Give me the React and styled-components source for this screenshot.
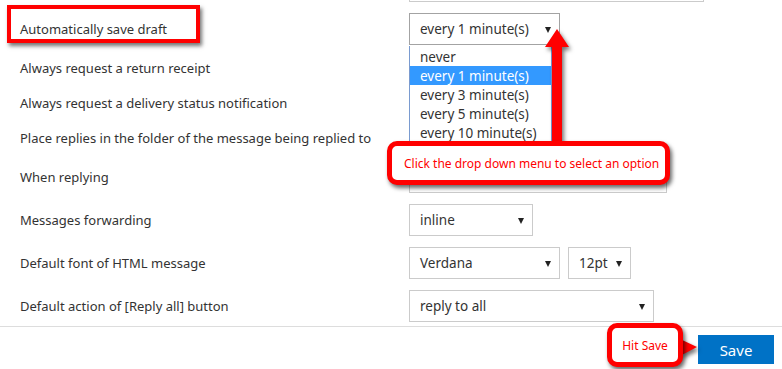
import React from "react";
import styled, { createGlobalStyle } from "styled-components";

const GlobalStyle = createGlobalStyle`
  html, body {
    margin: 0;
    padding: 0;
    background: #fff;
    overflow: hidden;
  }
  body {
    font-family: "Noto Sans", "Open Sans", sans-serif;
    color: #333;
  }
`;

const Page = styled.div`
  position: relative;
  width: 782px;
  height: 369px;
  overflow: hidden;
`;

const Form = styled.div`
  display: grid;
  grid-template-columns: 389px 1fr;
  row-gap: 11px;
  padding-left: 20px;
  padding-bottom: 4px;
  border-bottom: 1px solid #ddd;
`;

const Clip = styled.div`
  grid-column: 2;
  height: 2px;
  overflow: hidden;
  display: flex;
  align-items: flex-end;
`;

const Label = styled.div`
  font-size: 13px;
  height: ${(p) => (p.tall ? 32 : 24)}px;
  display: flex;
  align-items: center;
  grid-column: 1;
  white-space: nowrap;
`;

const Controls = styled.div`
  grid-column: 2;
  display: flex;
  gap: 8px;
  align-items: center;
`;

const Select = styled.div`
  position: relative;
  box-sizing: border-box;
  width: ${(p) => p.w}px;
  height: 32px;
  flex-shrink: 0;
  border: 1px solid ${(p) => (p.focused ? "#a3a3a3" : "#cbcbcb")};
  font-size: 13.5px;
  padding-left: 10px;
  display: flex;
  align-items: center;
  color: #333;
  &::after {
    content: "";
    position: absolute;
    right: 8px;
    top: 13px;
    border-left: 3.5px solid transparent;
    border-right: 3.5px solid transparent;
    border-top: 6px solid #222;
  }
`;

const Dropdown = styled.ul`
  position: absolute;
  left: 409px;
  top: 46px;
  width: 143px;
  height: 100px;
  margin: 0;
  padding: 1px 0 0;
  list-style: none;
  background: #fff;
  box-sizing: border-box;
  border: 1px solid #7a9bd0;
  border-top: none;
`;

const Option = styled.li`
  height: 19px;
  line-height: 20px;
  padding-left: 10px;
  font-size: 13.5px;
  background: ${(p) => (p.active ? "#3399ff" : "transparent")};
  color: ${(p) => (p.active ? "#fff" : "#333")};
`;

const Footer = styled.div`
  display: flex;
  justify-content: flex-end;
  padding: 8px 8px 0 0;
`;

const SaveButton = styled.button`
  width: 76px;
  height: 29px;
  border: none;
  background: #0072c6;
  color: #fff;
  font-family: "Noto Sans", sans-serif;
  font-size: 15px;
  padding: 0;
`;

const Highlight = styled.div`
  position: absolute;
  left: 7px;
  top: 5px;
  width: 193px;
  height: 38px;
  box-sizing: border-box;
  border: 4px solid #f00;
  box-shadow: 2px 3px 4px rgba(0, 0, 0, 0.55);
  pointer-events: none;
`;

const Callout = styled.div`
  position: absolute;
  left: ${(p) => p.x}px;
  top: ${(p) => p.y}px;
  width: ${(p) => p.w}px;
  height: ${(p) => p.h}px;
  box-sizing: border-box;
  border: 5px solid #f00;
  border-radius: 10px;
  background: #fff;
  box-shadow: 2px 3px 4px rgba(0, 0, 0, 0.6);
  color: #f00;
  font-size: 12px;
  display: flex;
  align-items: center;
  justify-content: ${(p) => (p.center ? "center" : "flex-start")};
  padding-left: ${(p) => (p.center ? 0 : 12)}px;
  z-index: 2;
`;

const Arrow = styled.svg`
  position: absolute;
  left: 0;
  top: 0;
  overflow: visible;
  z-index: 1;
  filter: drop-shadow(2px 3px 2px rgba(0, 0, 0, 0.55));
`;

const rows = [
  { label: "Automatically save draft", selects: [{ w: 151, text: "every 1 minute(s)", focused: true }] },
  { label: "Always request a return receipt" },
  { label: "Always request a delivery status notification" },
  { label: "Place replies in the folder of the message being replied to" },
  { label: "When replying", selects: [{ w: 258, text: "" }] },
  { label: "Messages forwarding", selects: [{ w: 124, text: "inline" }] },
  {
    label: "Default font of HTML message",
    selects: [
      { w: 151, text: "Verdana" },
      { w: 63, text: "12pt" },
    ],
  },
  { label: "Default action of [Reply all] button", selects: [{ w: 245, text: "reply to all" }] },
];

const options = ["never", "every 1 minute(s)", "every 3 minute(s)", "every 5 minute(s)", "every 10 minute(s)"];

export default function App() {
  return (
    <Page>
      <GlobalStyle />
      <Form>
        <Clip>
          <Select w={295} />
        </Clip>
        {rows.map((r) => (
          <React.Fragment key={r.label}>
            <Label tall={!!r.selects}>{r.label}</Label>
            {r.selects ? (
              <Controls>
                {r.selects.map((s, i) => (
                  <Select key={i} w={s.w} focused={s.focused}>
                    {s.text}
                  </Select>
                ))}
              </Controls>
            ) : (
              <Controls />
            )}
          </React.Fragment>
        ))}
      </Form>
      <Footer>
        <SaveButton>Save</SaveButton>
      </Footer>

      <Dropdown>
        {options.map((o, i) => (
          <Option key={o} active={i === 1}>
            {o}
          </Option>
        ))}
      </Dropdown>

      <Highlight />

      <Arrow width="782" height="369">
        <polygon points="557,29 569,47 562,47 562,145 552,145 552,47 545,47" fill="#f00" />
        <polygon points="680,339 697,347 680,356" fill="#f00" />
      </Arrow>

      <Callout x={387} y={141} w={283} h={44}>
        Click the drop down menu to select an option
      </Callout>
      <Callout x={607} y={323} w={76} h={44} center>
        Hit Save
      </Callout>
    </Page>
  );
}
